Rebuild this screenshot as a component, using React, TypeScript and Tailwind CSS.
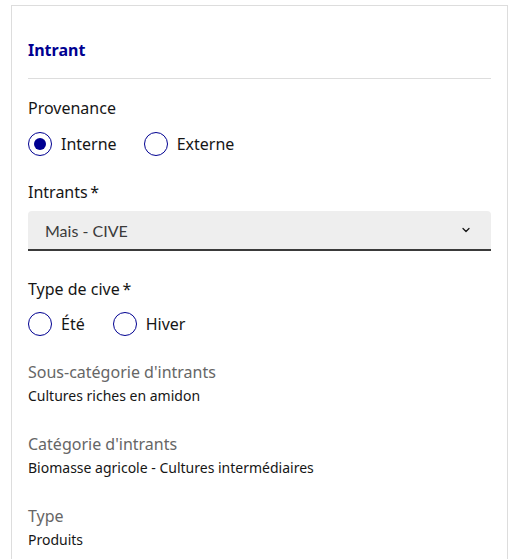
import { ChevronDown } from 'lucide-react'

function Radio({ label, checked = false }: { label: string; checked?: boolean }) {
  return (
    <label className="flex items-center gap-[9px]">
      <span className="flex h-6 w-6 items-center justify-center rounded-full border border-[#000091]">
        {checked && <span className="h-3 w-3 rounded-full bg-[#000091]" />}
      </span>
      <span className="text-[16px] text-[#161616]">{label}</span>
    </label>
  )
}

function Info({ label, value }: { label: string; value: string }) {
  return (
    <div>
      <p className="text-[16px] leading-6 text-[#666666]">{label}</p>
      <p className="text-[14px] leading-6 text-[#161616]">{value}</p>
    </div>
  )
}

export default function App() {
  return (
    <div className="h-[559px] overflow-hidden bg-white pl-[11px] pr-[7px] pt-[5px] font-['Noto_Sans',sans-serif]">
      <div className="h-[600px] border border-[#dddddd] px-4 pt-[32px]">
        <h2 className="text-[16px] font-bold leading-6 text-[#000091]">Intrant</h2>
        <div className="mt-[16px] h-px bg-[#dddddd]" />

        <p className="mt-[17px] text-[16px] leading-6 text-[#161616]">Provenance</p>
        <div className="mt-[12px] flex gap-[27px]">
          <Radio label="Interne" checked />
          <Radio label="Externe" />
        </div>

        <p className="mt-[24px] text-[16px] leading-6 text-[#161616]">Intrants{'\u2009'}*</p>
        <div className="mt-[7px] flex h-[40px] items-center justify-between rounded-t-[4px] border-b-2 border-[#3a3a3a] bg-[#eeeeee] pl-[17px] pr-[19px]">
          <span className="pt-[2px] font-['Lato',sans-serif] text-[16px] text-[#3a3a3a]">Mais - CIVE</span>
          <ChevronDown className="h-3 w-3 text-[#161616]" strokeWidth={2.5} />
        </div>

        <p className="mt-[26px] text-[16px] leading-6 text-[#161616]">Type de cive{'\u2009'}*</p>
        <div className="mt-[11px] flex gap-[28px]">
          <Radio label="Été" />
          <Radio label="Hiver" />
        </div>

        <div className="mt-[24px] flex flex-col gap-[24px]">
          <Info label="Sous-catégorie d'intrants" value="Cultures riches en amidon" />
          <Info label="Catégorie d'intrants" value="Biomasse agricole - Cultures intermédiaires" />
          <Info label="Type" value="Produits" />
        </div>
      </div>
    </div>
  )
}
